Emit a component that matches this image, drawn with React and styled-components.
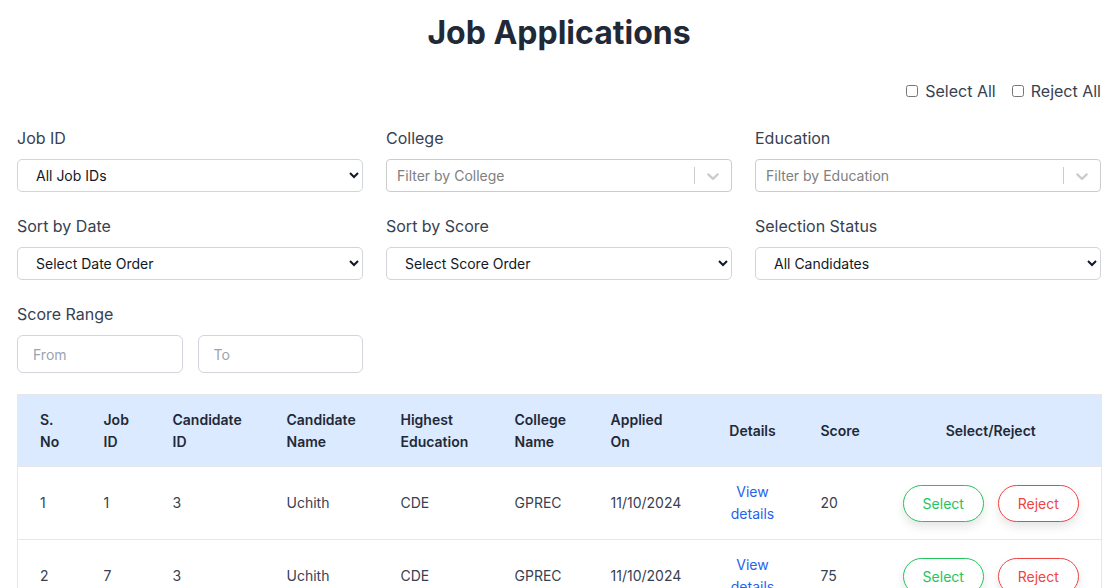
import React from "react";
import styled, { createGlobalStyle } from "styled-components";

const GlobalStyle = createGlobalStyle`
  html, body {
    margin: 0;
    background: #ffffff;
    font-family: Inter, "Noto Sans", sans-serif;
    color: #1f2937;
  }
`;

const Page = styled.div`
  width: 1084px;
  padding: 0 10px 0 17px;
`;

const Title = styled.h1`
  margin: 14px 0 0;
  font-size: 32px;
  line-height: 38px;
  font-weight: 700;
  text-align: center;
  color: #1f2937;
`;

const BulkRow = styled.div`
  display: flex;
  justify-content: flex-end;
  gap: 16px;
  margin-top: 27px;
`;

const CheckLabel = styled.label`
  display: flex;
  align-items: center;
  gap: 7px;
  font-size: 16px;
  line-height: 24px;
  color: #374151;

  input {
    margin: 0;
    width: 12px;
    height: 12px;
  }
`;

const FilterGrid = styled.div`
  display: grid;
  grid-template-columns: repeat(3, minmax(0, 1fr));
  column-gap: 23px;
  row-gap: 22px;
  margin-top: 23px;
`;

const Field = styled.div`
  display: flex;
  flex-direction: column;
  gap: 9px;
  min-width: 0;
`;

const Label = styled.div`
  font-size: 16px;
  line-height: 24px;
  color: #374151;
`;

const NativeSelect = styled.select`
  height: 33px;
  width: 100%;
  padding: 0 8px 0 14px;
  border: 1px solid #d1d5db;
  border-radius: 5px;
  background: #fff;
  font-family: Inter, "Noto Sans", sans-serif;
  font-size: 14px;
  color: #111827;
`;

const ComboBox = styled.div`
  height: 33px;
  box-sizing: border-box;
  display: flex;
  align-items: center;
  border: 1px solid #cccccc;
  border-radius: 4px;
  background: #fff;
`;

const ComboValue = styled.div`
  flex: 1;
  padding-left: 10px;
  font-size: 14px;
  color: #808080;
`;

const ComboSep = styled.span`
  width: 1px;
  align-self: stretch;
  margin: 7px 0;
  background: #cccccc;
`;

const ComboArrow = styled.div`
  display: flex;
  padding: 0 8px;
  color: #cccccc;
`;

const RangeRow = styled.div`
  display: flex;
  gap: 15px;
`;

const RangeInput = styled.input`
  flex: 1;
  min-width: 0;
  height: 38px;
  box-sizing: border-box;
  padding: 0 15px;
  border: 1px solid #d1d5db;
  border-radius: 6px;
  font-family: Inter, "Noto Sans", sans-serif;
  font-size: 14px;

  &::placeholder {
    color: #9ca3af;
  }
`;

const Table = styled.table`
  margin-top: 21px;
  width: 1084px;
  table-layout: fixed;
  border-collapse: collapse;
  border: 1px solid #e5e7eb;
  font-size: 14px;
`;

const HeadCell = styled.th`
  background: #dbeafe;
  padding: 14px 0 13px 22px;
  height: 44px;
  line-height: 22px;
  font-weight: 600;
  color: #1f2937;
  text-align: ${props => props.center ? "center" : "left"};
  ${props => props.center && "padding-left: 0;"}
`;

const Row = styled.tr`
  border-top: 1px solid #e5e7eb;
`;

const Cell = styled.td`
  padding: 14px 0 14px 22px;
  height: 44px;
  line-height: 22px;
  color: #374151;
  text-align: ${props => props.center ? "center" : "left"};
  ${props => props.center && "padding-left: 0;"}
`;

const DetailsLink = styled.a`
  color: #2563eb;
  text-decoration: none;
  display: inline-block;
  width: 50px;
`;

const Actions = styled.div`
  display: flex;
  justify-content: center;
  gap: 14px;
`;

const ActionButton = styled.button`
  width: 81px;
  height: 37px;
  border-radius: 999px;
  background: #fff;
  border: 1px solid ${props => props.reject ? "#ef4444" : "#22c55e"};
  color: ${props => props.reject ? "#ef4444" : "#22c55e"};
  font-family: Inter, "Noto Sans", sans-serif;
  font-size: 14px;
  box-shadow: 0 5px 10px rgba(0, 0, 0, 0.1);
`;

const Chevron = () => (
  <svg width="20" height="20" viewBox="0 0 20 20" fill="currentColor">
    <path d="M4.516 7.548c0.436-0.446 1.043-0.481 1.576 0l3.908 3.747 3.908-3.747c0.533-0.481 1.141-0.446 1.574 0 0.436 0.445 0.408 1.197 0 1.615-0.406 0.418-4.695 4.502-4.695 4.502-0.217 0.223-0.502 0.335-0.787 0.335s-0.57-0.112-0.789-0.335c0 0-4.287-4.084-4.695-4.502s-0.436-1.170 0-1.615z" />
  </svg>
);

const Combo = ({ placeholder }) => (
  <ComboBox>
    <ComboValue>{placeholder}</ComboValue>
    <ComboSep />
    <ComboArrow><Chevron /></ComboArrow>
  </ComboBox>
);

const columns = [
  { title: "S. No", width: 64 },
  { title: "Job ID", width: 69 },
  { title: "Candidate ID", width: 114 },
  { title: "Candidate Name", width: 114 },
  { title: "Highest Education", width: 114 },
  { title: "College Name", width: 96 },
  { title: "Applied On", width: 118 },
  { title: "Details", width: 92, center: true },
  { title: "Score", width: 82 },
  { title: "Select/Reject", width: 221, center: true },
];

const applications = [
  { sno: 1, jobId: 1, candidateId: 3, name: "Uchith", education: "CDE", college: "GPREC", applied: "11/10/2024", score: 20 },
  { sno: 2, jobId: 7, candidateId: 3, name: "Uchith", education: "CDE", college: "GPREC", applied: "11/10/2024", score: 75 },
];

const headLines = {
  "S. No": ["S.", "No"],
  "Job ID": ["Job", "ID"],
  "Candidate ID": ["Candidate", "ID"],
  "Candidate Name": ["Candidate", "Name"],
  "Highest Education": ["Highest", "Education"],
  "College Name": ["College", "Name"],
  "Applied On": ["Applied", "On"],
};

export default function App() {
  return (
    <Page>
      <GlobalStyle />
      <Title>Job Applications</Title>

      <BulkRow>
        <CheckLabel><input type="checkbox" />Select All</CheckLabel>
        <CheckLabel><input type="checkbox" />Reject All</CheckLabel>
      </BulkRow>

      <FilterGrid>
        <Field>
          <Label>Job ID</Label>
          <NativeSelect defaultValue="">
            <option value="">All Job IDs</option>
          </NativeSelect>
        </Field>
        <Field>
          <Label>College</Label>
          <Combo placeholder="Filter by College" />
        </Field>
        <Field>
          <Label>Education</Label>
          <Combo placeholder="Filter by Education" />
        </Field>
        <Field>
          <Label>Sort by Date</Label>
          <NativeSelect defaultValue="">
            <option value="">Select Date Order</option>
          </NativeSelect>
        </Field>
        <Field>
          <Label>Sort by Score</Label>
          <NativeSelect defaultValue="">
            <option value="">Select Score Order</option>
          </NativeSelect>
        </Field>
        <Field>
          <Label>Selection Status</Label>
          <NativeSelect defaultValue="">
            <option value="">All Candidates</option>
          </NativeSelect>
        </Field>
        <Field>
          <Label>Score Range</Label>
          <RangeRow>
            <RangeInput placeholder="From" />
            <RangeInput placeholder="To" />
          </RangeRow>
        </Field>
      </FilterGrid>

      <Table>
        <colgroup>
          {columns.map(col => <col key={col.title} style={{ width: col.width }} />)}
        </colgroup>
        <thead>
          <tr>
            {columns.map(col => (
              <HeadCell key={col.title} center={col.center}>
                {headLines[col.title]
                  ? <>{headLines[col.title][0]}<br />{headLines[col.title][1]}</>
                  : col.title}
              </HeadCell>
            ))}
          </tr>
        </thead>
        <tbody>
          {applications.map(app => (
            <Row key={app.sno}>
              <Cell>{app.sno}</Cell>
              <Cell>{app.jobId}</Cell>
              <Cell>{app.candidateId}</Cell>
              <Cell>{app.name}</Cell>
              <Cell>{app.education}</Cell>
              <Cell>{app.college}</Cell>
              <Cell>{app.applied}</Cell>
              <Cell center><DetailsLink href="#">View details</DetailsLink></Cell>
              <Cell>{app.score}</Cell>
              <Cell center>
                <Actions>
                  <ActionButton>Select</ActionButton>
                  <ActionButton reject>Reject</ActionButton>
                </Actions>
              </Cell>
            </Row>
          ))}
        </tbody>
      </Table>
    </Page>
  );
}
